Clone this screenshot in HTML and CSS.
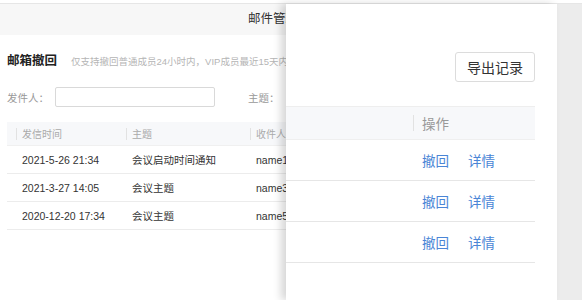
FILE: index.html
```html
<!DOCTYPE html>
<html lang="zh-CN">
<head>
<meta charset="utf-8">
<title>邮件管理</title>
<link rel="stylesheet" href="styles.css">
</head>
<body>
<div class="page">
  <div class="left">
    <div class="left-inner">
      <div class="hdr">邮件管理后台</div>
      <div class="intro">
        <h2 class="title">邮箱撤回</h2>
        <span class="note">仅支持撤回普通成员24小时内，VIP成员最近15天内的邮件</span>
      </div>
      <div class="filters">
        <label class="lbl">发件人：</label>
        <input class="inp" type="text">
        <label class="lbl lbl2">主题：</label>
      </div>
      <div class="tbl">
        <div class="tr th">
          <div class="c c1"><span class="sep"></span>发信时间</div>
          <div class="c c2"><span class="sep"></span>主题</div>
          <div class="c c3"><span class="sep"></span>收件人</div>
        </div>
        <div class="tr">
          <div class="c c1">2021-5-26 21:34</div>
          <div class="c c2">会议启动时间通知</div>
          <div class="c c3">name1</div>
        </div>
        <div class="tr">
          <div class="c c1">2021-3-27 14:05</div>
          <div class="c c2">会议主题</div>
          <div class="c c3">name3</div>
        </div>
        <div class="tr">
          <div class="c c1">2020-12-20 17:34</div>
          <div class="c c2">会议主题</div>
          <div class="c c3">name5</div>
        </div>
      </div>
    </div>
  </div>
  <div class="right">
    <div class="btn-row"><button class="btn">导出记录</button></div>
    <div class="rtbl">
      <div class="rtr rth">
        <div class="rspace"></div>
        <div class="rop"><span class="rsep"></span>操作</div>
      </div>
      <div class="rtr">
        <div class="rspace"></div>
        <div class="rop"><a class="lnk">撤回</a><a class="lnk">详情</a></div>
      </div>
      <div class="rtr">
        <div class="rspace"></div>
        <div class="rop"><a class="lnk">撤回</a><a class="lnk">详情</a></div>
      </div>
      <div class="rtr">
        <div class="rspace"></div>
        <div class="rop"><a class="lnk">撤回</a><a class="lnk">详情</a></div>
      </div>
    </div>
  </div>
  <div class="gutter"></div>
</div>
</body>
</html>
```

FILE: styles.css
```css
* { box-sizing: border-box; }
html, body { margin: 0; padding: 0; background: #fff; }
body {
  font-family: "Liberation Sans", "Noto Sans CJK SC", sans-serif;
  color: #333;
  width: 582px;
  height: 300px;
  overflow: hidden;
}
.page {
  margin-top: 3px;
  border-top: 1px solid #e6e6e6;
  display: flex;
  height: 297px;
}
.left {
  width: 286px;
  flex: none;
  overflow: hidden;
}
.left-inner { width: 600px; }
.hdr {
  height: 31px;
  background: #f7f7f7;
  padding-left: 248px;
  line-height: 31px;
  font-size: 12.5px;
  color: #333;
  white-space: nowrap;
}
.intro {
  margin-top: 18px;
  padding-left: 7px;
  display: flex;
  align-items: baseline;
  height: 16px;
}
.title {
  margin: 0;
  font-size: 12.5px;
  line-height: 16px;
  font-weight: bold;
  color: #222;
}
.note {
  margin-left: 14px;
  font-size: 9.5px;
  color: #b5b5b5;
  white-space: nowrap;
}
.filters {
  margin-top: 18px;
  padding-left: 7px;
  display: flex;
  align-items: center;
  height: 20px;
}
.lbl {
  font-size: 10.5px;
  color: #999;
  width: 48px;
}
.inp {
  width: 160px;
  height: 20px;
  border: 1px solid #d9d9d9;
  border-radius: 2px;
  margin: 0;
  padding: 0;
}
.lbl2 { margin-left: 33px; }
.tbl {
  margin-top: 15px;
  margin-left: 7px;
  width: 560px;
}
.tr {
  display: flex;
  height: 28px;
  align-items: center;
  border-bottom: 1px solid #ececec;
  padding-left: 9px;
  font-size: 10.5px;
  color: #333;
  white-space: nowrap;
}
.th {
  height: 24px;
  background: #f7f8fa;
  color: #aaa;
  font-size: 10px;
  border-bottom: 1px solid #f0f0f0;
}
.c {
  position: relative;
  padding-left: 6px;
}
.c1 { width: 110px; }
.c2 { width: 124px; }
.c3 { width: 120px; }
.sep {
  position: absolute;
  left: 0;
  top: 50%;
  margin-top: -6px;
  width: 1px;
  height: 12px;
  background: #e2e2e2;
}
.right {
  width: 271px;
  flex: none;
  background: #fff;
  box-shadow: -5px 0 8px rgba(0,0,0,0.16);
  position: relative;
  z-index: 1;
  padding-right: 22px;
}
.btn-row {
  display: flex;
  justify-content: flex-end;
  margin-top: 48px;
}
.btn {
  width: 80px;
  height: 30px;
  border: 1px solid #dcdcdc;
  border-radius: 3px;
  background: #fff;
  font-family: "Liberation Sans", "Noto Sans CJK SC", sans-serif;
  font-size: 14px;
  color: #333;
  padding: 0;
}
.rtbl { margin-top: 24px; }
.rtr {
  display: flex;
  height: 41px;
  align-items: center;
  border-bottom: 1px solid #e6e6e6;
}
.rth {
  height: 34px;
  background: #f7f8fa;
  border-top: 1px solid #eeeeee;
  border-bottom: 1px solid #efefef;
}
.rspace { width: 127px; }
.rop {
  position: relative;
  padding-left: 9px;
  font-size: 13.5px;
  color: #999;
  display: flex;
}
.rsep {
  position: absolute;
  left: 0;
  top: 50%;
  margin-top: -8px;
  width: 1px;
  height: 16px;
  background: #e2e2e2;
}
.lnk {
  color: #4a85d6;
  font-size: 13.5px;
  margin-right: 19px;
  cursor: pointer;
}
.gutter {
  flex: 1;
  background: #ececec;
}
```
